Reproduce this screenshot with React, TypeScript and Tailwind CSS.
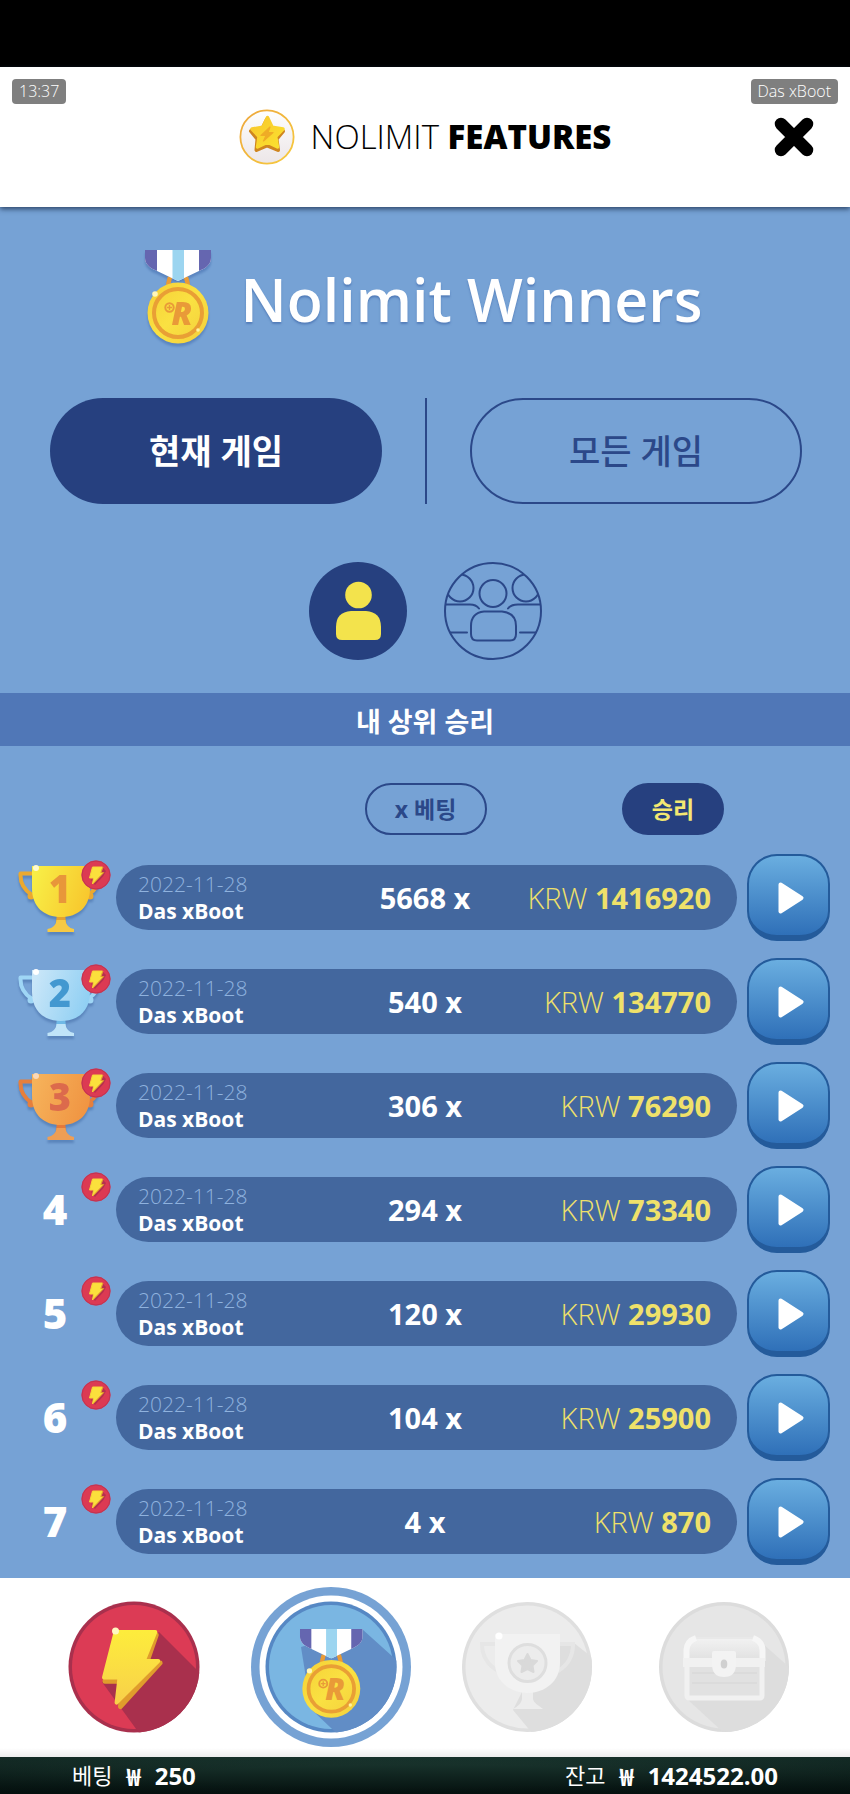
import React from "react";

type Row = { rank: number; bet: string; win: string };

const rows: Row[] = [
  { rank: 1, bet: "5668 x", win: "1416920" },
  { rank: 2, bet: "540 x", win: "134770" },
  { rank: 3, bet: "306 x", win: "76290" },
  { rank: 4, bet: "294 x", win: "73340" },
  { rank: 5, bet: "120 x", win: "29930" },
  { rank: 6, bet: "104 x", win: "25900" },
  { rank: 7, bet: "4 x", win: "870" },
];

const cups = [
  { from: "#f8ee46", to: "#f8c72d", handle: "#eba92f", foot: "#f6c944", stem: "#e5a22f", digit: "#e8963a", glint: "#fffbd0" },
  { from: "#c9e6f8", to: "#8fcff3", handle: "#9fd6f5", foot: "#c0e4f8", stem: "#6fb9e6", digit: "#4398d0", glint: "#ffffff" },
  { from: "#f6b25a", to: "#f09442", handle: "#e67f3c", foot: "#ee9e55", stem: "#e5793a", digit: "#dc6a4c", glint: "#fbd9b8" },
];

function StarIcon() {
  return (
    <svg viewBox="0 0 56 56" className="size-14 shrink-0" aria-hidden="true">
      <defs>
        <linearGradient id="star-ring" x1="0" y1="0" x2="1" y2="1">
          <stop offset="0" stopColor="#eda63c" />
          <stop offset="1" stopColor="#f7cb3e" />
        </linearGradient>
        <linearGradient id="star-fill" x1="0" y1="0" x2="1" y2="1">
          <stop offset="0" stopColor="#f8c62c" />
          <stop offset="1" stopColor="#fbe22f" />
        </linearGradient>
        <linearGradient id="star-disc" x1="0" y1="0" x2="0" y2="1">
          <stop offset="0" stopColor="#fefefe" />
          <stop offset="1" stopColor="#ece6e8" />
        </linearGradient>
      </defs>
      <circle cx="28" cy="28" r="26.6" fill="url(#star-disc)" stroke="url(#star-ring)" strokeWidth="1.8" />
      <path d="M28 10.500L33 20.500L44 22.300L37.500 30L39 41L28 36.500L17.500 41L18.500 30L12 22L23 20.500Z" fill="#cf851f" stroke="#cf851f" strokeWidth="4" strokeLinejoin="round" />
      <path d="M28.5 8.5L33.2 18.2L44 20L36.7 27.5L38.5 38L28.5 33.3L18.5 38L20 27.5L13 20L23.8 18.2Z" fill="url(#star-fill)" stroke="url(#star-fill)" strokeWidth="3.4" strokeLinejoin="round" />
      <path d="M31 18L22 26.500H27L24.5 32L34 23.500H29Z" fill="#efac26" stroke="#efac26" strokeWidth="1.200" strokeLinejoin="round" />
    </svg>
  );
}

/* Drawn on a 68 x 98 canvas so that it can be nested inside other drawings. */
function MedalArt({ id }: { id: string }) {
  return (
    <g>
      <defs>
        <linearGradient id={id} x1="0" y1="0" x2="1" y2="1">
          <stop offset="0" stopColor="#f5cf36" />
          <stop offset=".5" stopColor="#fae142" />
          <stop offset="1" stopColor="#f3ce3b" />
        </linearGradient>
        <clipPath id={id + "-ribbon"}>
          <path d="M1 0H67V8C67 14 62 18 57 20L34 31L11 20C6 18 1 14 1 8Z" />
        </clipPath>
      </defs>
      <path d="M24 35L26 27M44 35L42 27" stroke="#e99b36" strokeWidth="4.5" />
      <g clipPath={"url(#" + id + "-ribbon)"}>
        <path d="M0 0H68V32H0Z" fill="#fff" />
        <path d="M0 0H13V32H0ZM55 0H68V32H55Z" fill="#6566b0" />
        <path d="M28.5 0H40V32H28.5Z" fill="#9cd5f0" />
      </g>
      <circle cx="34" cy="63" r="30.5" fill={"url(#" + id + ")"} />
      <circle cx="34" cy="63" r="24" fill="none" stroke="#e99f35" strokeWidth="4" />
      <circle cx="25.500" cy="57.500" r="4.200" fill="none" stroke="#e99a38" strokeWidth="2" />
      <path d="M25.500 55V60M23 57.500H28" stroke="#e99a38" strokeWidth="1.4" />
      <text x="38" y="75" fontSize="32" fontWeight="800" fontStyle="italic" textAnchor="middle" fill="#e99a38">
        R
      </text>
      <circle cx="11" cy="44" r="2.8" fill="#fff6b8" />
      <circle cx="54" cy="80" r="1.8" fill="#fff3a0" />
    </g>
  );
}

function Bolt({ x, y, s }: { x: number; y: number; s: number }) {
  return (
    <g transform={`translate(${x} ${y}) scale(${s})`}>
      <path d="M17 5H56L46 34H60L19 79L21 53H3Z" fill="#e09c2c" stroke="#e09c2c" strokeWidth="5" strokeLinejoin="round" />
      <path d="M14 2H55L43 32H58L15 75L18 49H2Z" fill="url(#bolt-fill)" stroke="url(#bolt-fill)" strokeWidth="4" strokeLinejoin="round" />
    </g>
  );
}

function BoltBadge() {
  return (
    <svg viewBox="0 0 30 30" className="absolute top-[15px] left-[81px] size-[30px]" aria-hidden="true">
      <circle cx="15" cy="15" r="14.5" fill="#dc3a53" />
      <circle cx="15" cy="15" r="14" fill="none" stroke="#c03352" />
      <path d="M22 8L25 11L22.500 16L14 25L10 20Z" fill="#b5304e" />
      <path d="M11.500 7H21.5L19.500 13H22L11.500 24L12.500 18H8.5Z" fill="#fbe03c" stroke="#f8d438" strokeWidth="1" strokeLinejoin="round" />
      <path d="M22 7L20 12.5H22.8L12 24" fill="none" stroke="#e0992c" strokeWidth="1" />
    </svg>
  );
}

function Cup({ rank }: { rank: number }) {
  const c = cups[rank - 1];
  const id = "cup-" + rank;
  return (
    <svg viewBox="0 0 84 74" className="mt-[10px] h-[74px] w-[84px] overflow-visible drop-shadow-[0_3px_1px_rgba(50,90,150,0.4)]" role="img" aria-label={String(rank)}>
      <defs>
        <linearGradient id={id} x1="0" y1=".3" x2="1" y2=".6">
          <stop offset="0" stopColor={c.from} />
          <stop offset="1" stopColor={c.to} />
        </linearGradient>
      </defs>
      <path d="M16 8.500H2.500C2 18 6 25 14 30M70 8.500H81.500C82 18 78 25 70 30" fill="none" stroke={c.handle} strokeWidth="4" strokeLinejoin="round" />
      <circle cx="13" cy="31" r="3.500" fill={c.handle} />
      <circle cx="72" cy="31" r="3.500" fill={c.handle} />
      <path d="M39 48H47L48 58H38Z" fill={c.stem} />
      <path d="M38.500 55H47.500C48 60 51 63 56 64V67H29.500V64C35 63 38 60 38.500 55Z" fill={c.foot} />
      <path d="M14 1H72V23C72 42 60 52 43 52C26 52 14 42 14 23Z" fill={"url(#" + id + ")"} />
      <text x="42" y="38" fontSize="38" fontWeight="800" textAnchor="middle" fill={c.digit}>
        {rank}
      </text>
      <circle cx="18" cy="3" r="3" fill={c.glint} />
    </svg>
  );
}

function PersonIcon() {
  return (
    <svg viewBox="0 0 98 98" className="size-[98px]" aria-hidden="true">
      <circle cx="49" cy="49" r="49" fill="#26407f" />
      <circle cx="49.500" cy="33" r="13.300" fill="#f3e34c" />
      <path d="M42 49H57Q72 50 72 65V72Q72 78 66 78H33Q27 78 27 72V65Q27 50 42 49Z" fill="#f3e34c" />
    </svg>
  );
}

function PeopleIcon() {
  return (
    <svg viewBox="0 0 98 98" className="size-[98px]" fill="none" stroke="#2b4889" strokeWidth="2" strokeLinecap="round" aria-hidden="true">
      <defs>
        <clipPath id="crowd">
          <circle cx="49" cy="49" r="48" />
        </clipPath>
      </defs>
      <circle cx="49" cy="49" r="48" />
      <circle cx="49" cy="31.500" r="13.500" />
      <path d="M40 49.500H58Q72 51 72 64V72Q72 78.500 66 78.500H33Q27 78.500 27 72V64Q27 51 40 49.500Z" />
      <g clipPath="url(#crowd)">
        <circle cx="16" cy="26" r="13.500" />
        <circle cx="82" cy="26" r="13.500" />
        <path d="M0 42.500H26Q32 42.500 35 46.500M98 42.500H74Q67 42.500 64 46.500M0 70.500H23M76 70.500H98" />
      </g>
    </svg>
  );
}

function PlayIcon() {
  return (
    <svg viewBox="0 0 28 34" className="mt-1 ml-1 h-[34px] w-[28px]" aria-hidden="true">
      <path d="M3.500 3.500L24.500 17L3.500 30.500Z" fill="#fff" stroke="#fff" strokeWidth="4" strokeLinejoin="round" />
    </svg>
  );
}

function RedBolt() {
  return (
    <svg viewBox="0 0 132 132" className="size-[132px]" aria-hidden="true">
      <defs>
        <linearGradient id="bolt-fill" x1="0" y1="0" x2="0" y2="1">
          <stop offset="0" stopColor="#fdec3c" />
          <stop offset="1" stopColor="#f8d04a" />
        </linearGradient>
        <clipPath id="red-disc">
          <circle cx="66" cy="66" r="65.500" />
        </clipPath>
      </defs>
      <circle cx="66" cy="66" r="65.500" fill="#a9304d" />
      <circle cx="66" cy="66" r="62" fill="#dc3b55" />
      <path d="M91 31L132 72V132H71L34 81Z" fill="#a9304d" clipPath="url(#red-disc)" />
      <Bolt x={34} y={29} s={0.97} />
      <circle cx="47.500" cy="30" r="3.500" fill="#fff8c0" />
    </svg>
  );
}

function ActiveMedal() {
  return (
    <svg viewBox="0 0 160 160" className="size-40" aria-hidden="true">
      <defs>
        <clipPath id="blue-disc">
          <circle cx="80" cy="80" r="65.500" />
        </clipPath>
      </defs>
      <circle cx="80" cy="80" r="80" fill="#76a2d4" />
      <circle cx="80" cy="80" r="71.500" fill="#fff" />
      <circle cx="80" cy="80" r="65.500" fill="#5688c4" />
      <circle cx="80" cy="80" r="62" fill="#7ab6e2" />
      <path d="M111 42L160 86V160H100L60 122L50 60Z" fill="#618dc6" clipPath="url(#blue-disc)" />
      <g transform="translate(48 42) scale(.95)">
        <MedalArt id="nav-medal" />
      </g>
    </svg>
  );
}

function GreyCup() {
  return (
    <svg viewBox="0 0 132 132" className="size-[132px]" aria-hidden="true">
      <defs>
        <clipPath id="cup-disc">
          <circle cx="66" cy="66" r="65" />
        </clipPath>
      </defs>
      <circle cx="66" cy="66" r="65" fill="#dfdfdf" />
      <circle cx="66" cy="66" r="61.500" fill="#ececec" />
      <path d="M113 42L132 57V132H71L52 109L64 85L35 67L40 50Z" fill="#dedede" clipPath="url(#cup-disc)" />
      <path d="M36 43H21C21 56 27 64 37 70M98 43H112C112 56 107 64 97 70" fill="none" stroke="#e6e6e6" strokeWidth="4" />
      <path d="M61 90H72V98C73 103 79 105 82 108H52C57 105 60 103 61 98Z" fill="#ededed" />
      <path d="M34 33H99V62C99 80 84 92 66.500 92C49 92 34 80 34 62Z" fill="#f2f2f2" />
      <circle cx="66.500" cy="62" r="18.500" fill="#ececec" stroke="#dedede" strokeWidth="3" />
      <path d="M66.500 53L69.500 59L76 60L71.500 64.500L72.500 71L66.500 68L60.500 71L61.500 64.500L57 60L63.500 59Z" fill="#d9d9d9" stroke="#d9d9d9" strokeWidth="2" strokeLinejoin="round" />
      <circle cx="38" cy="35" r="3.500" fill="#fff" />
    </svg>
  );
}

function GreyChest() {
  return (
    <svg viewBox="0 0 132 132" className="size-[132px]" aria-hidden="true">
      <defs>
        <clipPath id="chest-disc">
          <circle cx="66" cy="66" r="65" />
        </clipPath>
        <linearGradient id="chest-lid" x1="0" y1="0" x2="0" y2="1">
          <stop offset="0" stopColor="#f2f2f2" />
          <stop offset="1" stopColor="#e0e0e0" />
        </linearGradient>
      </defs>
      <circle cx="66" cy="66" r="65" fill="#dcdcdc" />
      <circle cx="66" cy="66" r="61.500" fill="#e6e6e6" />
      <path d="M104 42L132 67V132H66L29 98Z" fill="#dddddd" clipPath="url(#chest-disc)" />
      <rect x="29" y="60" width="75" height="37" rx="2" fill="#e1e1e1" stroke="#f1f1f1" strokeWidth="5" />
      <path d="M34 72H99M34 82H99" stroke="#d9d9d9" strokeWidth="1.500" />
      <path d="M28 60V49Q28 37 41 37H92Q105 37 105 49V60Z" fill="url(#chest-lid)" stroke="#e9e9e9" strokeWidth="2" />
      <path d="M28.500 60V49Q29 40 38 37M104.500 60V49Q104 40 95 37" fill="none" stroke="#f6f6f6" strokeWidth="6" />
      <path d="M25 57H107V66H25Z" fill="#f1f1f1" />
      <path d="M54 52Q54 50 56 50H76Q78 50 78 52V63Q78 76 66 76Q54 76 54 63Z" fill="#f3f3f3" />
      <ellipse cx="66" cy="63" rx="3.300" ry="4.500" fill="#d0d0d0" />
    </svg>
  );
}

function Badge({ children }: { children: React.ReactNode }) {
  return <span className="h-[25px] rounded-[4px] bg-[#7f7f7f] px-[7px] text-[16px] leading-[24px] font-light text-white">{children}</span>;
}

export default function App() {
  return (
    <div className="w-full overflow-hidden bg-[#76a2d5] font-['Open_Sans','Noto_Sans_CJK_KR',sans-serif] text-white">
      <div className="h-[67px] bg-black" />
      <header className="relative flex h-[140px] items-center justify-center bg-white shadow-[0_2px_5px_rgba(25,45,75,0.8)]">
        <div className="absolute inset-x-3 top-3 flex justify-between">
          <Badge>13:37</Badge>
          <Badge>Das xBoot</Badge>
        </div>
        <StarIcon />
        <p className="ml-4 text-[33px] leading-10 font-light whitespace-nowrap text-black">
          NOLIMIT <b className="font-extrabold">FEATURES</b>
        </p>
        <button type="button" aria-label="닫기" className="absolute top-[50px] right-9">
          <svg viewBox="0 0 40 40" className="size-10" aria-hidden="true">
            <path d="M7 7L33 33M33 7L7 33" stroke="#000" strokeWidth="12.500" strokeLinecap="round" />
          </svg>
        </button>
      </header>

      <main>
        <div className="flex items-center justify-center gap-[29px] pt-[43px] pr-1">
          <svg viewBox="0 0 68 98" className="h-[98px] w-[68px] overflow-visible drop-shadow-[0_3px_1px_rgba(50,90,160,0.4)]" aria-hidden="true">
            <MedalArt id="title-medal" />
          </svg>
          <h1 className="text-[59px] leading-[98px] font-semibold whitespace-nowrap [text-shadow:0_2px_2px_rgba(50,90,160,0.5)]">Nolimit Winners</h1>
        </div>

        <div className="mt-[50px] flex h-[106px] items-stretch justify-between pr-12 pl-[50px]">
          <button type="button" aria-pressed="true" className="w-[44.15%] rounded-full bg-[#26407f] text-[34px] font-bold">
            현재 게임
          </button>
          <div className="w-[2px] bg-[#2b4889]" />
          <button type="button" aria-pressed="false" className="w-[44.15%] rounded-full border-2 border-[#2b4889] text-[34px] font-medium text-[#2b4889]">
            모든 게임
          </button>
        </div>

        <div className="mt-[58px] flex justify-center gap-[37px]">
          <button type="button" aria-label="내 승리" aria-pressed="true">
            <PersonIcon />
          </button>
          <button type="button" aria-label="모든 플레이어" aria-pressed="false">
            <PeopleIcon />
          </button>
        </div>

        <h2 className="mt-[33px] bg-[#5077b7] pt-1 text-center text-[27px] leading-[49px] font-bold">내 상위 승리</h2>

        <table className="mb-[5px] w-full table-fixed border-separate border-spacing-0">
          <colgroup>
            <col className="w-[116px]" />
            <col />
            <col className="w-[189px]" />
            <col />
            <col className="w-[113px]" />
          </colgroup>
          <thead>
            <tr className="h-[99px]">
              <td />
              <td />
              <th scope="col" className="p-0 pt-[37px] pr-[2px] align-top">
                <button type="button" className="h-[52px] w-[122px] rounded-full border-2 border-[#2b4889] text-[23px] font-bold text-[#2b4889]">
                  x 베팅
                </button>
              </th>
              <th scope="col" className="p-0 pt-[37px] pr-[13px] text-right align-top">
                <button type="button" className="h-[52px] w-[102px] rounded-full bg-[#26407f] text-[23px] font-bold text-[#f3e872]">
                  승리
                </button>
              </th>
              <td />
            </tr>
          </thead>
          <tbody>
            {rows.map((r) => (
              <tr key={r.rank} className="h-[104px]">
                <td className="p-0">
                  <div className="relative flex h-[104px] items-center pl-[18px]">
                    {r.rank <= 3 ? (
                      <Cup rank={r.rank} />
                    ) : (
                      <div className="w-[74px] text-center text-[42px] leading-[104px] font-extrabold">{r.rank}</div>
                    )}
                    <BoltBadge />
                  </div>
                </td>
                <td className="p-0">
                  <div className="flex h-[65px] flex-col justify-center rounded-l-full bg-[#43679e] pt-[2px] pl-[22px] leading-[27px]">
                    <span className="text-[21px] font-light text-[#8fb2de]">2022-11-28</span>
                    <b className="text-[21px]">Das xBoot</b>
                  </div>
                </td>
                <td className="p-0">
                  <div className="h-[65px] bg-[#43679e] pr-[3px] text-center text-[29px] leading-[65px] font-bold">{r.bet}</div>
                </td>
                <td className="p-0">
                  <div className="h-[65px] rounded-r-full bg-[#43679e] pr-[26px] text-right text-[29px] leading-[65px] font-light whitespace-nowrap text-[#efe16a]">
                    KRW <b className="font-bold">{r.win}</b>
                  </div>
                </td>
                <td className="p-0 pt-px pl-[10px]">
                  <button
                    type="button"
                    aria-label="재생"
                    className="flex h-[87px] w-[83px] items-center justify-center rounded-[30px] border-2 border-b-[6px] border-[#245b9b] bg-linear-to-b from-[#6aaee0] to-[#2f70b8]"
                  >
                    <PlayIcon />
                  </button>
                </td>
              </tr>
            ))}
          </tbody>
        </table>
      </main>

      <nav className="grid h-[179px] grid-cols-4 items-center bg-linear-to-b from-white from-95% to-[#ededed] pr-[28px] pb-[2px] pl-9">
        <button type="button" aria-label="부스트" className="justify-self-center">
          <RedBolt />
        </button>
        <button type="button" aria-label="위너스" aria-current="page" className="justify-self-center">
          <ActiveMedal />
        </button>
        <button type="button" aria-label="토너먼트" className="justify-self-center">
          <GreyCup />
        </button>
        <button type="button" aria-label="보물 상자" className="justify-self-center">
          <GreyChest />
        </button>
      </nav>

      <footer className="bg-linear-to-b from-[#1c3a32] to-[#06110f]">
        <div className="flex h-[37px] items-center justify-between bg-[radial-gradient(ellipse_at_center,transparent_40%,rgba(0,10,10,0.35))] px-[72px] text-2xl leading-[37px]">
          <div className="flex gap-[14px]">
            <span className="text-[22px] leading-[37px]">베팅</span>
            <b className="font-['Noto_Sans_CJK_KR','Open_Sans',sans-serif]">₩</b>
            <b>250</b>
          </div>
          <div className="flex gap-[14px]">
            <span className="text-[22px] leading-[37px]">잔고</span>
            <b className="font-['Noto_Sans_CJK_KR','Open_Sans',sans-serif]">₩</b>
            <b>1424522.00</b>
          </div>
        </div>
      </footer>
    </div>
  );
}
